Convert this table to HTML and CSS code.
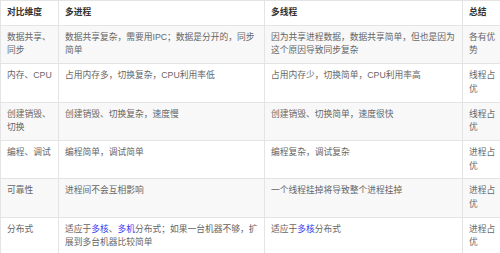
FILE: index.html
```html
<!DOCTYPE html>
<html lang="zh-CN">
<head>
<meta charset="utf-8">
<link rel="stylesheet" href="styles.css">
</head>
<body>
<table class="cmp">
  <colgroup>
    <col class="c1"><col class="c2"><col class="c3"><col class="c4">
  </colgroup>
  <thead>
    <tr><th>对比维度</th><th>多进程</th><th>多线程</th><th>总结</th></tr>
  </thead>
  <tbody>
    <tr class="alt"><td>数据共享、同步</td><td>数据共享复杂，需要用IPC；数据是分开的，同步简单</td><td>因为共享进程数据，数据共享简单，但也是因为这个原因导致同步复杂</td><td>各有优势</td></tr>
    <tr><td>内存、CPU</td><td>占用内存多，切换复杂，CPU利用率低</td><td>占用内存少，切换简单，CPU利用率高</td><td>线程占优</td></tr>
    <tr class="alt"><td>创建销毁、切换</td><td>创建销毁、切换复杂，速度慢</td><td>创建销毁、切换简单，速度很快</td><td>线程占优</td></tr>
    <tr><td>编程、调试</td><td>编程简单，调试简单</td><td>编程复杂，调试复杂</td><td>进程占优</td></tr>
    <tr class="alt"><td>可靠性</td><td>进程间不会互相影响</td><td>一个线程挂掉将导致整个进程挂掉</td><td>进程占优</td></tr>
    <tr><td>分布式</td><td>适应于<a class="lnk">多核</a>、<a class="lnk">多机</a>分布式；如果一台机器不够，扩展到多台机器比较简单</td><td>适应于<a class="lnk">多核</a>分布式</td><td>进程占优</td></tr>
  </tbody>
</table>
</body>
</html>
```
FILE: styles.css
```css
html, body {
  margin: 0;
  padding: 0;
  background: #fff;
  overflow: hidden;
}
.cmp {
  border-collapse: collapse;
  table-layout: fixed;
  width: 504px;
  font-family: "Liberation Sans", "Noto Sans CJK SC", sans-serif;
  font-size: 8.75px;
  line-height: 13.7px;
  color: #666;
}
.c1 { width: 58px; }
.c2 { width: 206px; }
.c3 { width: 198px; }
.c4 { width: 42px; }
.cmp th, .cmp td {
  border: 1px solid #e4e4e4;
  padding: 5px 4px 5px 6px;
  vertical-align: top;
  text-align: left;
  word-break: normal;
}
.cmp th {
  color: #333;
  font-weight: bold;
  background: #fff;
}
.cmp tr.alt td {
  background: #f8f8f8;
}
.lnk {
  color: #3b3bf5;
  text-decoration: none;
}
```
